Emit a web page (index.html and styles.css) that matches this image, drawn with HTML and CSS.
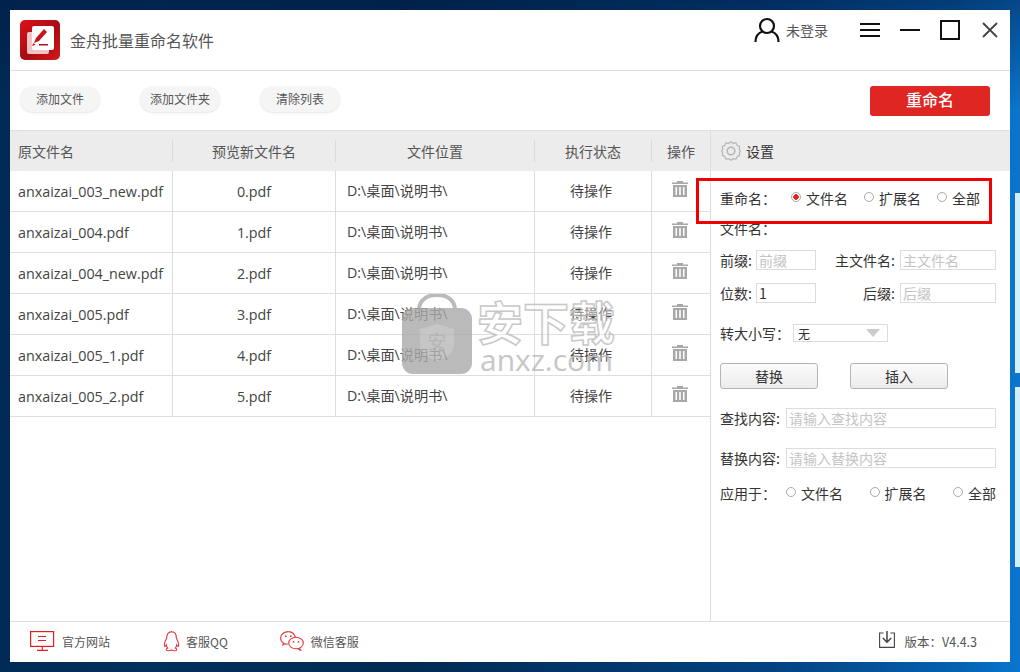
FILE: index.html
```html
<!DOCTYPE html>
<html lang="zh-CN">
<head>
<meta charset="utf-8">
<title>金舟批量重命名软件</title>
<link rel="stylesheet" href="styles.css">
</head>
<body>
<div class="strip strip-a"></div>
<div class="strip strip-b"></div>
<div class="window">
  <header class="titlebar">
    <svg class="logo" viewBox="0 0 40 40" width="40" height="40">
      <defs>
        <linearGradient id="lg" x1="0" y1="0" x2="1" y2="1"><stop offset="0" stop-color="#d8141a"/><stop offset=".55" stop-color="#a80c10"/><stop offset="1" stop-color="#d5191c"/></linearGradient>
      </defs>
      <rect width="40" height="40" rx="5" fill="url(#lg)"/>
      <rect x="7" y="12" width="22" height="22" rx="2" fill="#f0c4c6"/>
      <rect x="12" y="6" width="22" height="24" rx="2" fill="#fff"/>
      <path d="M14 23l2-5 8-9 3 3-8 9z" fill="#c4161b"/>
      <path d="M12 26l1.500-3 2 1.700z" fill="#c4161b"/>
      <rect x="19" y="24" width="9" height="1.500" fill="#b01015"/>
    </svg>
    <h1 class="app-name">金舟批量重命名软件</h1>
    <div class="account">
      <svg viewBox="0 0 26 26" width="26" height="26" fill="none" stroke="#111" stroke-width="2.200"><circle cx="13" cy="9" r="7"/><path d="M1.500 25c0-6.500 4-9.500 7-10.500M24.500 25c0-6.500-4-9.500-7-10.500"/></svg>
      <span>未登录</span>
    </div>
    <div class="win-controls">
      <svg viewBox="0 0 20 14" width="20" height="14" stroke="#111" stroke-width="2"><path d="M0 1h20M0 7h20M0 13h20"/></svg>
      <svg viewBox="0 0 20 20" width="20" height="20" stroke="#111" stroke-width="2"><path d="M0 10h20"/></svg>
      <svg viewBox="0 0 20 20" width="20" height="20" fill="none" stroke="#111" stroke-width="2"><rect x="1" y="1" width="18" height="18"/></svg>
      <svg class="close" viewBox="0 0 16 16" width="16" height="16" stroke="#444" stroke-width="1.800"><path d="M1 1l14 14M15 1L1 15"/></svg>
    </div>
  </header>

  <div class="toolbar">
    <div class="tool-group">
      <button class="pill">添加文件</button>
      <button class="pill">添加文件夹</button>
      <button class="pill">清除列表</button>
    </div>
    <button class="rename-btn">重命名</button>
  </div>

  <div class="main">
    <section class="files">
      <div class="row head">
        <div class="cell name">原文件名</div><div class="cell c">预览新文件名</div><div class="cell c">文件位置</div><div class="cell c">执行状态</div><div class="cell c">操作</div>
      </div>
      <div class="row"><div class="cell name">anxaizai_003_new.pdf</div><div class="cell c">0.pdf</div><div class="cell path">D:\桌面\说明书\</div><div class="cell c st">待操作</div><div class="cell c"><svg class="trash" viewBox="0 0 16 16" width="16" height="16"><use href="#trash"/></svg></div></div>
      <div class="row"><div class="cell name">anxaizai_004.pdf</div><div class="cell c">1.pdf</div><div class="cell path">D:\桌面\说明书\</div><div class="cell c st">待操作</div><div class="cell c"><svg class="trash" viewBox="0 0 16 16" width="16" height="16"><use href="#trash"/></svg></div></div>
      <div class="row"><div class="cell name">anxaizai_004_new.pdf</div><div class="cell c">2.pdf</div><div class="cell path">D:\桌面\说明书\</div><div class="cell c st">待操作</div><div class="cell c"><svg class="trash" viewBox="0 0 16 16" width="16" height="16"><use href="#trash"/></svg></div></div>
      <div class="row"><div class="cell name">anxaizai_005.pdf</div><div class="cell c">3.pdf</div><div class="cell path">D:\桌面\说明书\</div><div class="cell c st">待操作</div><div class="cell c"><svg class="trash" viewBox="0 0 16 16" width="16" height="16"><use href="#trash"/></svg></div></div>
      <div class="row"><div class="cell name">anxaizai_005_1.pdf</div><div class="cell c">4.pdf</div><div class="cell path">D:\桌面\说明书\</div><div class="cell c st">待操作</div><div class="cell c"><svg class="trash" viewBox="0 0 16 16" width="16" height="16"><use href="#trash"/></svg></div></div>
      <div class="row"><div class="cell name">anxaizai_005_2.pdf</div><div class="cell c">5.pdf</div><div class="cell path">D:\桌面\说明书\</div><div class="cell c st">待操作</div><div class="cell c"><svg class="trash" viewBox="0 0 16 16" width="16" height="16"><use href="#trash"/></svg></div></div>
    </section>

    <aside class="settings">
      <div class="settings-head">
        <svg viewBox="0 0 20 20" width="20" height="20" fill="none" stroke="#b5b5b5" stroke-width="1.200"><path d="M10 .8l2.300 1.500 2.700-.3 1.200 2.400 2.400 1.300-.3 2.700L19.300 10l-1 1.600.3 2.700-2.400 1.300-1.200 2.400-2.700-.3L10 19.200l-2.300-1.500-2.700.3-1.200-2.400-2.400-1.300.3-2.700L.7 10l1-1.600-.3-2.700 2.400-1.300L5 2l2.700.3z"/><circle cx="10" cy="10" r="3.800" stroke-width="1.500"/></svg>
        <span>设置</span>
      </div>
      <div class="settings-body">
        <div class="radio-row first">
          <span class="lab">重命名：</span>
          <span class="radios r1"><label class="radio on"><i></i>文件名</label><label class="radio"><i></i>扩展名</label><label class="radio"><i></i>全部</label></span>
        </div>
        <div class="sub-label">文件名：</div>
        <div class="two">
          <label class="fld"><span class="w-a">前缀:</span><span class="inp i-s ph">前缀</span></label>
          <label class="fld"><span>主文件名:</span><span class="inp i-m ph">主文件名</span></label>
        </div>
        <div class="two">
          <label class="fld"><span class="w-a">位数:</span><span class="inp i-s">1</span></label>
          <label class="fld"><span>后缀:</span><span class="inp i-m ph">后缀</span></label>
        </div>
        <div class="case-row">
          <span>转大小写：</span>
          <span class="select">无<i class="caret"></i></span>
        </div>
        <div class="btn-row"><button class="std">替换</button><button class="std">插入</button></div>
        <div class="find-row"><span>查找内容:</span><span class="inp i-l ph">请输入查找内容</span></div>
        <div class="find-row"><span>替换内容:</span><span class="inp i-l ph">请输入替换内容</span></div>
        <div class="radio-row apply">
          <span class="lab">应用于：</span>
          <span class="radios r2"><label class="radio"><i></i>文件名</label><label class="radio"><i></i>扩展名</label><label class="radio"><i></i>全部</label></span>
        </div>
      </div>
    </aside>
  </div>

  <footer class="footer">
    <div class="links">
      <a class="lnk l1">
        <svg viewBox="0 0 25 20" width="25" height="20" fill="none" stroke="#e02020" stroke-width="1.200"><rect x=".6" y=".6" width="23" height="14.800"/><path d="M8 5.500h8M8 9.500h8M12.300 15.500v4M7 19.400h11"/></svg>
        <span>官方网站</span>
      </a>
      <a class="lnk l2">
        <svg viewBox="0 0 18 21" width="18" height="21" fill="none" stroke="#e0393b" stroke-width="1.100"><path d="M9 .6c3.500 0 5.300 2.700 5.300 6 0 1.400 1.300 2.500 2 5 .6 2.300.4 3.800-.3 3.800-.5 0-1-.8-1.300-1.400-.1 1.300-.7 2.400-1.500 3.100 1 .4 1.700 1 1.500 1.700-.3.900-2.400 1-3.500.7-.8-.2-1.200-.6-1.700-.6s-.9.400-1.700.6c-1.100.3-3.200.2-3.500-.7-.2-.7.500-1.300 1.500-1.700-.8-.7-1.400-1.800-1.500-3.100-.3.600-.8 1.400-1.300 1.400-.7 0-.9-1.500-.3-3.800.7-2.500 2-3.600 2-5 0-3.300 1.800-6 5.300-6z"/></svg>
        <span>客服QQ</span>
      </a>
      <a class="lnk l3">
        <svg viewBox="0 0 24 20" width="24" height="20" fill="none" stroke="#e0393b" stroke-width="1.100"><path d="M8.500.6C4 .6.600 3.400.6 7c0 2 1.100 3.800 2.800 4.900l-.6 2 2.300-1.200c.8.300 1.800.4 2.700.4"/><path d="M15.500 6.500C14.500 3 12 .9 8.500.6"/><ellipse cx="16" cy="12" rx="7.300" ry="5.800"/><path d="M19.500 17l1.200 2.300-3-1.500"/><circle cx="5.800" cy="5.200" r=".9" fill="#e0393b" stroke="none"/><circle cx="10.800" cy="5.200" r=".9" fill="#e0393b" stroke="none"/><circle cx="13.500" cy="10.800" r=".9" fill="#e0393b" stroke="none"/><circle cx="18.500" cy="10.800" r=".9" fill="#e0393b" stroke="none"/></svg>
        <span>微信客服</span>
      </a>
    </div>
    <div class="version">
      <svg viewBox="0 0 16 17" width="16" height="17" fill="none" stroke="#444" stroke-width="1.100"><path d="M4.500 2H.6v14.400h14.800V2h-3.900"/><path d="M8 0v11M3.800 7l4.200 4.300L12.200 7" stroke-width="1.500"/></svg>
      <span>版本：V4.4.3</span>
    </div>
  </footer>

  <div class="red-box"></div>
  <div class="watermark">
    <svg viewBox="0 0 70 80" width="70" height="80">
      <path d="M17 24V16C17 6 25 1 35 1s18 5 18 15v8" fill="none" stroke="#aaa" stroke-width="4"/>
      <rect x="0" y="14" width="70" height="66" rx="11" fill="#aaa"/>
      <path d="M35 30l17 5v15c0 9-8 14-17 17-9-3-17-8-17-17V35z" fill="#b8b8b8"/>
      <text x="35" y="55" font-size="19" text-anchor="middle" fill="#a4a4a4">安</text>
    </svg>
    <div class="wm-text"><b>安下载</b><span>anxz.com</span></div>
  </div>
</div>

<svg class="defs" width="0" height="0">
  <symbol id="trash" viewBox="0 0 16 16">
    <path fill="#a8a8a8" d="M5 0h6v1.500h5V3H0V1.500h5zM1 4h14v12H1zm2.500 2v8h1.500V6zm3.700 0v8h1.600V6zm3.800 0v8h1.500V6z" fill-rule="evenodd"/>
  </symbol>
</svg>
</body>
</html>
```
FILE: styles.css
```css
* { box-sizing: border-box; }
html, body { margin: 0; height: 100%; }
body {
  width: 1020px;
  height: 672px;
  padding: 10px;
  overflow: hidden;
  position: relative;
  background:
    linear-gradient(180deg, rgba(0,25,65,.5) 0, rgba(0,25,65,0) 110px),
    linear-gradient(90deg, #012b56 0, #01305c 15%, #002a52 40%, #03417f 75%, #0561b0 94%, #0a76cf 100%);
  font-family: "Noto Sans CJK SC", "Open Sans", sans-serif;
  font-size: 14px;
  color: #333;
}
.strip { position: absolute; right: 0; width: 5px; background: #d6eefa; }
.strip-a { top: 193px; height: 180px; }
.strip-b { top: 387px; height: 180px; }
.window {
  position: relative;
  width: 1000px;
  height: 652px;
  background: #fff;
  display: flex;
  flex-direction: column;
}
.titlebar {
  height: 61px;
  border-bottom: 1px solid #dedede;
  display: flex;
  align-items: center;
  padding: 0 12px 0 10px;
  flex: none;
}
.logo { flex: none; }
.app-name {
  margin: 0 0 0 10px;
  font-size: 16px;
  font-weight: 400;
  color: #555;
}
.account {
  margin-left: auto;
  margin-bottom: 20px;
  display: flex;
  align-items: center;
  gap: 6px;
  font-size: 14px;
  color: #555;
}
.win-controls {
  margin-left: 32px;
  margin-bottom: 20px;
  display: flex;
  align-items: center;
  gap: 20px;
}
.win-controls .close { margin-left: 2px; }
.toolbar {
  height: 60px;
  border-bottom: 1px solid #dedede;
  flex: none;
  display: flex;
  align-items: center;
  justify-content: space-between;
  padding: 0 20px 0 10px;
}
.tool-group { display: flex; gap: 40px; margin-bottom: 4px; }
.pill {
  width: 80px;
  height: 26px;
  border: 0;
  border-radius: 13px;
  background: #f5f5f5;
  box-shadow: 0 1px 2px rgba(0,0,0,.1);
  font: inherit;
  font-size: 12px;
  color: #555;
  padding: 0;
}
.rename-btn {
  width: 120px;
  height: 30px;
  border: 0;
  border-radius: 3px;
  background: #e02622;
  color: #fff;
  font: inherit;
  font-size: 16px;
  font-weight: 500;
  padding: 0 0 3px;
}
.main { flex: 1; display: flex; min-height: 0; }
.files { width: 700px; flex: none; }
.row {
  display: grid;
  grid-template-columns: 163px 163px 199px 117px 58px;
  height: 41px;
  border-bottom: 1px solid #dedede;
}
.cell {
  display: flex;
  align-items: center;
  border-right: 1px solid #dedede;
  font-family: "Open Sans", "Noto Sans CJK SC", sans-serif;
  font-size: 14.300px;
  color: #444;
  white-space: nowrap;
}
.cell:last-child { border-right: 0; }
.cell.name { padding-left: 8px; }
.cell.c { justify-content: center; }
.cell.path { padding: 0 0 2px 11px; font-size: 14.200px; }
.cell.st { font-size: 14px; padding: 0 4px 3px 0; }
.row.head {
  height: 40px;
  background: #ececec;
  border-bottom: 0;
  align-items: center;
}
.row.head .cell {
  height: 22px;
  border-right-color: #d9d9d9;
  font-size: 14px;
  font-family: "Noto Sans CJK SC", sans-serif;
  color: #555;
}
.trash { margin: -4px 2px 0 0; }
.settings { flex: 1; border-left: 1px solid #dedede; min-width: 0; }
.settings-head {
  height: 40px;
  background: #ececec;
  display: flex;
  align-items: center;
  gap: 5px;
  padding-left: 10px;
  color: #333;
}
.settings-body { padding: 0 14px 0 9px; color: #333; }
.radio-row { display: flex; align-items: center; }
.radio-row.first { height: 23px; margin-top: 15px; }
.lab { width: 71px; flex: none; }
.radios { display: flex; }
.r1 { gap: 16px; }
.radio { display: flex; align-items: center; gap: 5px; }
.radio i {
  width: 10px; height: 10px; border: 1px solid #aaa; border-radius: 50%;
  display: block; position: relative; top: -1px;
}
.radio.on i { background: radial-gradient(circle, #e02622 0 2.500px, #fff 3px); }
.sub-label { margin-top: 9px; height: 20px; line-height: 20px; }
.two { display: flex; justify-content: space-between; margin-top: 12px; height: 20px; }
.two + .two { margin-top: 13px; }
.fld { display: flex; align-items: center; gap: 5px; }
.w-a { width: 31px; white-space: nowrap; }
.inp {
  height: 20px;
  border: 1px solid #dcdcdc;
  display: flex;
  align-items: center;
  padding-left: 2px;
  color: #333;
  white-space: nowrap;
}
.ph { color: #c4c4c4; }
.i-s { width: 60px; }
.i-m { width: 96px; }
.i-l { width: 210px; }
.case-row { display: flex; align-items: center; margin-top: 21px; height: 18px; }
.case-row > span:first-child { width: 73px; white-space: nowrap; }
.select {
  width: 95px;
  height: 18px;
  border: 1px solid #dcdcdc;
  display: flex;
  align-items: center;
  padding-left: 4px;
  font-size: 12px;
  justify-content: space-between;
}
.caret {
  width: 0; height: 0; margin-right: 7px;
  border-left: 7px solid transparent;
  border-right: 7px solid transparent;
  border-top: 8px solid #ccc;
}
.btn-row { display: flex; gap: 32px; margin-top: 21px; }
.std {
  width: 98px;
  height: 26px;
  border: 1px solid #b4b4b4;
  border-radius: 3px;
  background: linear-gradient(#fbfbfb, #ececec);
  font: inherit;
  color: #333;
  padding: 0;
}
.find-row { display: flex; align-items: center; justify-content: space-between; height: 20px; margin-top: 20px; white-space: nowrap; }
.btn-row + .find-row { margin-top: 19px; }
.apply { margin-top: 15px; height: 20px; }
.apply .lab { width: 66px; }
.r2 { flex: 1; justify-content: space-between; }
.footer {
  height: 41px;
  flex: none;
  border-top: 1px solid #dedede;
  display: flex;
  align-items: center;
  justify-content: space-between;
  padding: 0 33px 2px 20px;
  font-size: 12px;
  color: #555;
}
.links { display: flex; }
.lnk { display: flex; align-items: center; gap: 7px; }
.l2 { margin-left: 52px; gap: 6px; }
.l3 { margin-left: 52px; gap: 7px; }
.version { display: flex; align-items: center; gap: 10px; font-size: 12.500px; }
.version svg { margin-top: -4px; }
.red-box {
  position: absolute;
  left: 686px;
  top: 168px;
  width: 296px;
  height: 46px;
  border: 3px solid #f00000;
  pointer-events: none;
}
.watermark {
  position: absolute;
  left: 392px;
  top: 284px;
  display: flex;
  opacity: .8;
  pointer-events: none;
}
.wm-text { display: flex; flex-direction: column; margin-left: 5px; color: #b9b9b9; }
.wm-text b {
  font-size: 46px;
  font-weight: 700;
  line-height: 52px;
  color: rgba(255,255,255,.55);
  -webkit-text-stroke: 1.500px #bbb;
}
.wm-text span {
  font-size: 30px;
  font-family: "Open Sans", sans-serif;
  line-height: 28px;
  margin-left: 3px;
}
.defs { position: absolute; }
```
